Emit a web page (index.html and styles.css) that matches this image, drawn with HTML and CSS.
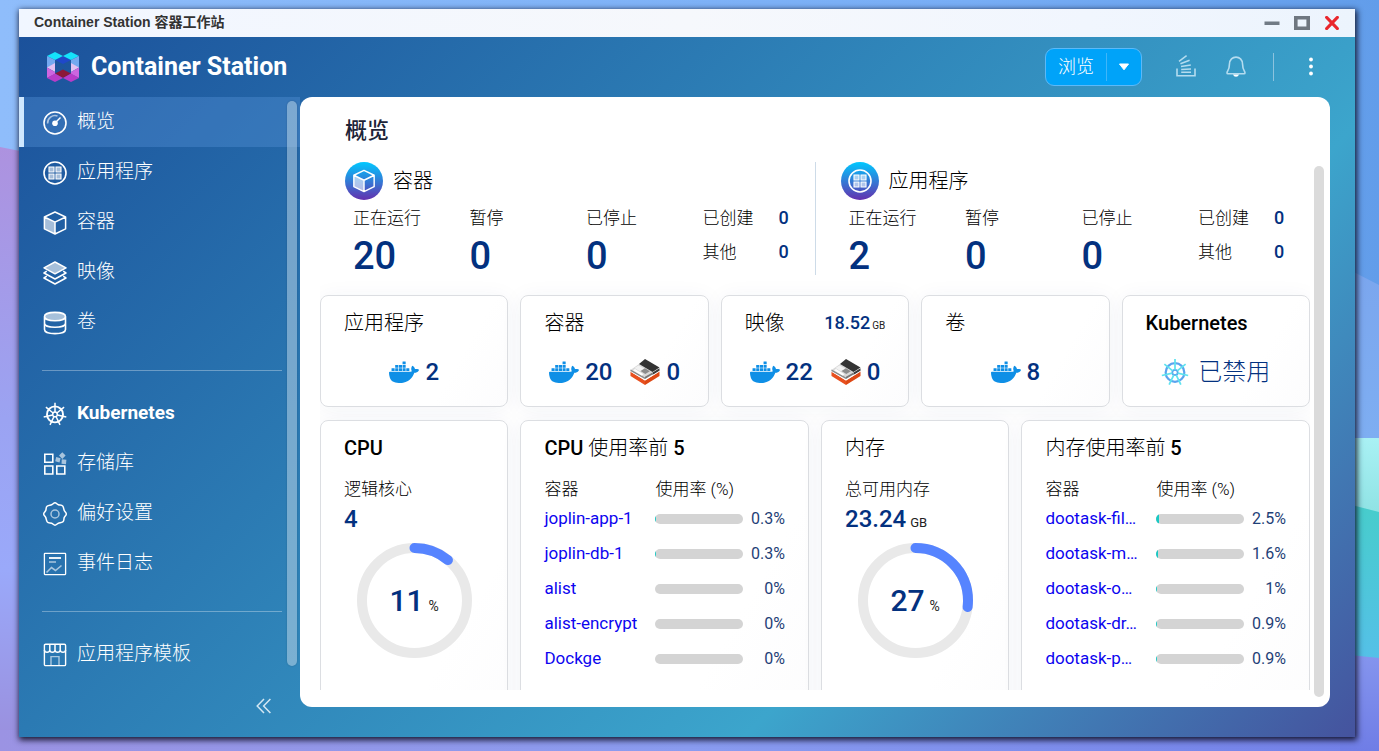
FILE: index.html
```html
<!DOCTYPE html>
<html lang="zh-CN">
<head>
<meta charset="utf-8">
<title>Container Station 容器工作站</title>
<link rel="stylesheet" href="styles.css">
</head>
<body>
<svg class="wallpaper" viewBox="0 0 1379 751" preserveAspectRatio="none" aria-hidden="true">
  <defs>
    <linearGradient id="sky"><stop offset="0" stop-color="#8fbdfb"/><stop offset=".7" stop-color="#78aef6"/><stop offset="1" stop-color="#629dea"/></linearGradient>
    <linearGradient id="dusk" x2="0" y2="1"><stop offset="0" stop-color="#ad92df"/><stop offset=".45" stop-color="#9ba3f2"/><stop offset=".7" stop-color="#9aa9fa"/><stop offset="1" stop-color="#9a8edc"/></linearGradient>
    <linearGradient id="shore"><stop offset="0" stop-color="#9b93e3"/><stop offset=".5" stop-color="#8a9cf0"/><stop offset="1" stop-color="#7280e8"/></linearGradient>
    <linearGradient id="rim" x2="0" y2="1"><stop offset="0" stop-color="#7ba6ee"/><stop offset="1" stop-color="#7eaef2"/></linearGradient>
    <linearGradient id="foam" x2="0" y2="1"><stop offset="0" stop-color="#a9f1f4"/><stop offset="1" stop-color="#8fe2e4"/></linearGradient>
    <linearGradient id="sea" x2="0" y2="1"><stop offset="0" stop-color="#47cdcb"/><stop offset="1" stop-color="#55c0e8"/></linearGradient>
    <linearGradient id="reef" x2="0" y2="1"><stop offset="0" stop-color="#8595ee"/><stop offset="1" stop-color="#6f7de6"/></linearGradient>
  </defs>
  <rect width="1379" height="751" fill="url(#sky)"/>
  <path d="M0 147L40 155V751H0z" fill="url(#dusk)"/>
  <path d="M0 730H1379V751H0z" fill="url(#shore)"/>
  <path d="M1340 265L1379 285V440H1340z" fill="url(#rim)"/>
  <path d="M1340 438H1379V515H1340z" fill="url(#foam)"/>
  <path d="M1340 502L1379 512V660H1340z" fill="url(#sea)"/>
  <path d="M1340 654L1379 658V751H1340z" fill="url(#reef)"/>
</svg>
<svg class="sprite" aria-hidden="true">
  <defs>
    <linearGradient id="disc" x2="0" y2="1"><stop offset="0" stop-color="#00c8ff"/><stop offset="1" stop-color="#6430ae"/></linearGradient>
    <symbol id="i-gauge" viewBox="0 0 24 24"><circle cx="12" cy="12" r="11" fill="none" stroke="currentColor" stroke-width="1.6"/><path d="M4.6 12.5A7.5 7.5 0 0 1 14.5 5" fill="none" stroke="currentColor" stroke-width="1.6" opacity=".6"/><path d="M12 12L17.5 6.5" stroke="currentColor" stroke-width="1.4"/><circle cx="12" cy="12.2" r="2.8" fill="currentColor"/></symbol>
    <symbol id="i-apps" viewBox="0 0 24 24"><circle cx="12" cy="12" r="11" fill="none" stroke="currentColor" stroke-width="1.6"/><g stroke="currentColor" stroke-width="1.1" fill="#fff" fill-opacity=".6"><path d="M6 6h5v5h-5zM13 6h5v5h-5zM6 13h5v5h-5zM13 13h5v5h-5z"/></g></symbol>
    <symbol id="i-cube" viewBox="0 0 24 24"><path d="M1.5 6.3L12 11.4V22.8L1.5 17.6z" fill="#fff" fill-opacity=".6"/><path d="M12 1L22.6 6V17.8L12 23L1.4 17.8V6zM1.4 6L12 11.2L22.6 6M12 11.2V23" fill="none" stroke="currentColor" stroke-width="1.5" stroke-linejoin="round"/></symbol>
    <symbol id="i-layers" viewBox="0 0 24 24"><path d="M12 1L23 6.8L12 12.8L1 6.8z" fill="#fff" fill-opacity=".6"/><path d="M12 1L23 6.8L12 12.8L1 6.8zM3.8 10.2L1 12L12 18L23 12L20.2 10.2M3.8 15.2L1 17L12 23L23 17L20.2 15.2" fill="none" stroke="currentColor" stroke-width="1.5" stroke-linejoin="round"/></symbol>
    <symbol id="i-disk" viewBox="0 0 24 24"><ellipse cx="12" cy="5.6" rx="10.4" ry="4" fill="#fff" fill-opacity=".6"/><path d="M1.5 5.6C1.5 0 22.5 0 22.5 5.6S1.5 11.2 1.5 5.6V18.6C1.5 24 22.5 24 22.5 18.6V5.6M1.5 12.2C1.5 17.6 22.5 17.6 22.5 12.2" fill="none" stroke="currentColor" stroke-width="1.6"/></symbol>
    <symbol id="i-helm" viewBox="0 0 24 24"><g fill="none" stroke="var(--rim, currentColor)" stroke-width="1.9"><circle cx="12" cy="12.4" r="8"/><circle cx="12" cy="12.4" r="2.3" stroke-width="1.5"/></g><path d="M12 10V.8M13.9 11L21.1 5.2M14.3 13L23.3 15M13 14.5L17 22.8M11 14.5L7 22.8M9.7 13L.7 15M10.1 11L2.9 5.2" fill="none" stroke="currentColor" stroke-width="1.5"/></symbol>
    <symbol id="i-repo" viewBox="0 0 24 24"><path d="M1.8 2.2h8v8h-8zM1.8 14h8v8h-8zM13.8 14h8v8h-8z" fill="none" stroke="currentColor" stroke-width="1.6"/><path d="M19.3.3L22.6 3.6L19.3 6.9L16 3.6zM13.2 5L17.6 6.2L16.5 10.4L12.2 9.2zM18.8 7.3L23.4 7.8L23 12.3L18.5 11.8z" fill="currentColor" opacity=".6"/></symbol>
    <symbol id="i-gear" viewBox="0 0 24 24"><path d="M12 .8C13.3.8 14 2.3 15.4 2.8S18.7 2.3 19.8 4.2 20.5 6.8 21.2 8.4 23.3 10.5 23.3 12 21.8 14.1 21.2 15.6 21.4 18.8 19.8 19.8 16.9 20.6 15.4 21.2 13.4 23.2 12 23.2 10.1 21.8 8.6 21.2 5.3 21.4 4.2 19.8 3.4 17.1 2.8 15.6.7 13.5.7 12 2.2 9.9 2.8 8.4 2.6 5.2 4.2 4.2 7.2 3.4 8.6 2.8 10.7.8 12 .8z" fill="none" stroke="currentColor" stroke-width="1.5"/><circle cx="12" cy="12" r="4" fill="none" stroke="currentColor" stroke-width="1.5" opacity=".6"/></symbol>
    <symbol id="i-log" viewBox="0 0 24 24"><rect x="1.4" y="1.4" width="21.2" height="21.2" rx=".5" fill="none" stroke="currentColor" stroke-width="1.3"/><path d="M6 6h12" stroke="currentColor" stroke-width="1.8"/><path d="M6 10h7M3.5 20.5L8.5 15.5L12.5 18.5L18.5 13.5" fill="none" stroke="currentColor" stroke-width="1.6" opacity=".6"/></symbol>
    <symbol id="i-store" viewBox="0 0 24 24"><rect x="1.4" y="1.2" width="21.2" height="21.4" rx="1.2" fill="none" stroke="currentColor" stroke-width="1.4"/><path d="M1.4 7C1.6 10 6.5 10 6.8 7V1M6.8 7C7 10 11.8 10 12 7V1M12 7C12.2 10 17 10 17.2 7V1M17.2 7C17.5 10 22.4 10 22.6 7" fill="none" stroke="currentColor" stroke-width="1.5"/><path d="M8 22.5V13.6h8V22.5" fill="none" stroke="currentColor" stroke-width="1.4" opacity=".6"/></symbol>
    <symbol id="i-whale" viewBox="0 0 24 17"><path transform="translate(0 -3.3)" fill="#0f8fe6" d="M13.983 11.078h2.119a.186.186 0 00.186-.185V9.006a.186.186 0 00-.186-.186h-2.119a.185.185 0 00-.185.185v1.888c0 .102.083.185.185.185m-2.954-5.43h2.118a.186.186 0 00.186-.186V3.574a.186.186 0 00-.186-.185h-2.118a.185.185 0 00-.185.185v1.888c0 .102.082.185.185.186m0 2.716h2.118a.187.187 0 00.186-.186V6.29a.186.186 0 00-.186-.185h-2.118a.185.185 0 00-.185.185v1.887c0 .102.082.185.185.186m-2.93 0h2.12a.186.186 0 00.184-.186V6.29a.185.185 0 00-.185-.185H8.1a.185.185 0 00-.185.185v1.887c0 .102.083.185.185.186m-2.964 0h2.119a.186.186 0 00.185-.186V6.29a.185.185 0 00-.185-.185H5.136a.186.186 0 00-.186.185v1.887c0 .102.084.185.186.186m5.893 2.715h2.118a.186.186 0 00.186-.185V9.006a.186.186 0 00-.186-.186h-2.118a.185.185 0 00-.185.185v1.888c0 .102.082.185.185.185m-2.93 0h2.12a.185.185 0 00.184-.185V9.006a.185.185 0 00-.184-.186h-2.12a.185.185 0 00-.184.185v1.888c0 .102.083.185.185.185m-2.964 0h2.119a.185.185 0 00.185-.185V9.006a.185.185 0 00-.184-.186h-2.12a.186.186 0 00-.186.186v1.887c0 .102.084.185.186.185m-2.92 0h2.12a.185.185 0 00.184-.185V9.006a.185.185 0 00-.184-.186h-2.12a.185.185 0 00-.184.185v1.888c0 .102.082.185.185.185M23.763 9.89c-.065-.051-.672-.51-1.954-.51-.338.001-.676.03-1.01.087-.248-1.7-1.653-2.53-1.716-2.566l-.344-.199-.226.327c-.284.438-.49.922-.612 1.43-.23.97-.09 1.882.403 2.661-.595.332-1.55.413-1.744.42H.751a.751.751 0 00-.75.748 11.376 11.376 0 00.692 4.062c.545 1.428 1.355 2.48 2.41 3.124 1.18.723 3.1 1.137 5.275 1.137.983.003 1.963-.086 2.93-.266a12.248 12.248 0 003.823-1.389c.98-.567 1.86-1.288 2.61-2.136 1.252-1.418 1.998-2.997 2.553-4.4h.221c1.372 0 2.215-.549 2.68-1.009.309-.293.55-.65.707-1.046l.098-.288Z"/></symbol>
    <symbol id="i-lxd" viewBox="0 0 29 26"><path d="M0 12.5L14.5 21.5V26L0 17z" fill="#e8501f"/><path d="M14.5 21.5L29 12.5V17L14.5 26z" fill="#dd4814"/><path d="M0 11L8.5 5L22 13L14.5 19.5L14.5 20.8L0 12.5z" fill="#d9d9d9"/><path d="M14.5 0L29 8.5L22 13L8.5 5z" fill="#333"/><path d="M22 13.6L29 9.3V11.8L22 16z" fill="#3b3b3b"/><path d="M14.5 20.6L29 12V12.6L14.5 21.4L0 12.8V12z" fill="#fff"/><path d="M14.5 17.8L22 13.4V15.6L14.5 20z" fill="#777"/><path d="M0 12L14.5 20V18.6L0 10.6z" fill="#8a8a8a"/><path d="M10 12L14.5 9.3L19.3 12.2L14.8 15z" fill="#8c8c8c"/><path d="M4 9L8 6.4L13.5 9.6L9.3 12.2z" fill="#f2f2f2"/><path d="M2.5 11.2L4.5 10L13 15.2L11 16.5z" fill="#fff"/></symbol>
  </defs>
</svg>

<div class="window">
  <div class="titlebar">
    <span class="titlebar-text">Container Station 容器工作站</span>
    <button class="winbtn" aria-label="最小化"><svg width="16" height="14" viewBox="0 0 16 14"><path d="M.5 5.5h15v3.5H.5z" fill="#717b85"/></svg></button>
    <button class="winbtn" aria-label="最大化"><svg width="16" height="14" viewBox="0 0 16 14"><path d="M1.8 1.8h12.4v10.4H1.8z" fill="none" stroke="#6f7780" stroke-width="3.6"/></svg></button>
    <button class="winbtn" aria-label="关闭"><svg width="16" height="14" viewBox="0 0 16 14"><path d="M2.6 1.4L13.4 12.6M13.4 1.4L2.6 12.6" stroke="#e9262c" stroke-width="3" stroke-linecap="round"/></svg></button>
  </div>
  <div class="app">
    <header class="header">
      <svg class="logo" viewBox="0 0 32 30" aria-hidden="true">
        <path d="M16 4L24 8L16 12L8 8z" fill="#1f48c9"/><path d="M16 17.5L24 21.5L16 26L8 21.5z" fill="#8c1838"/>
        <path d="M8 0L16 4L8 8L0 4zM24 0L32 4L24 8L16 4z" fill="#14e3fb"/>
        <path d="M0 4L8 8V12L0 16zM32 4L24 8V12L32 16z" fill="#73a9f0"/>
        <path d="M8 11L0 15.5L8 20zM24 11L32 15.5L24 20z" fill="#e2c2f2"/>
        <path d="M0 15.5L8 20V22L0 26zM32 15.5L24 20V22L32 26z" fill="#cd66e0"/>
        <path d="M0 26L8 21.5L16 26L8 30zM32 26L24 21.5L16 26L24 30z" fill="#b93cc8"/>
      </svg>
      <h1 class="brand">Container Station</h1>
      <div class="browse">
        <button class="browse-main">浏览</button>
        <button class="browse-more" aria-label="更多浏览选项"><svg width="12" height="8" viewBox="0 0 12 8"><path d="M1.5 1h9L6 6.8z" fill="#fff" stroke="#fff" stroke-width="1" stroke-linejoin="round"/></svg></button>
      </div>
      <button class="tool tool-tasks" aria-label="后台任务"><svg width="20" height="24" viewBox="0 0 20 24"><path d="M1 13.5V20.8H19V13.5" fill="none" stroke="currentColor" stroke-width="1.6"/><path d="M5.2 17.3H15M5.2 14.4L15 13.9M5 11.6L14.8 10M4.4 8.8L13.6 5.2M3 6.3L10.6 .6" stroke="currentColor" stroke-width="1.5" fill="none"/></svg></button>
      <button class="tool tool-bell" aria-label="通知"><svg width="20" height="22" viewBox="0 0 20 22"><path d="M3.4 8.500C3.4 -1.4 16.6 -1.4 16.6 8.500C16.6 14.2 19 15 19 17Q19 17.700 18 17.700H2Q1 17.700 1 17C1 15 3.4 14.2 3.4 8.500z" fill="none" stroke="currentColor" stroke-width="1.6"/><path d="M7 18.400H13Q12.3 20.800 10 20.800T7 18.400z" fill="#fff"/></svg></button>
      <span class="tool-sep"></span>
      <button class="tool tool-dots" aria-label="菜单"><svg width="6" height="20" viewBox="0 0 6 20"><g fill="#fff"><circle cx="3" cy="2.500" r="1.900"/><circle cx="3" cy="9.500" r="1.900"/><circle cx="3" cy="16.500" r="1.900"/></g></svg></button>
    </header>
    <div class="body">
      <aside class="sidebar">
        <nav class="nav">
          <a class="nav-item nav-active" href="#"><svg class="nav-icon"><use href="#i-gauge"/></svg><span>概览</span></a>
          <a class="nav-item" href="#"><svg class="nav-icon"><use href="#i-apps"/></svg><span>应用程序</span></a>
          <a class="nav-item" href="#"><svg class="nav-icon"><use href="#i-cube"/></svg><span>容器</span></a>
          <a class="nav-item" href="#"><svg class="nav-icon"><use href="#i-layers"/></svg><span>映像</span></a>
          <a class="nav-item" href="#"><svg class="nav-icon"><use href="#i-disk"/></svg><span>卷</span></a>
          <hr class="nav-sep">
          <a class="nav-item nav-latin" href="#"><svg class="nav-icon"><use href="#i-helm"/></svg><span>Kubernetes</span></a>
          <a class="nav-item" href="#"><svg class="nav-icon"><use href="#i-repo"/></svg><span>存储库</span></a>
          <a class="nav-item" href="#"><svg class="nav-icon"><use href="#i-gear"/></svg><span>偏好设置</span></a>
          <a class="nav-item" href="#"><svg class="nav-icon"><use href="#i-log"/></svg><span>事件日志</span></a>
          <hr class="nav-sep">
          <a class="nav-item" href="#"><svg class="nav-icon"><use href="#i-store"/></svg><span>应用程序模板</span></a>
        </nav>
        <button class="collapse" aria-label="收起"><svg width="16" height="16" viewBox="0 0 16 16"><path d="M8 1L1.2 8L8 15M14.4 1L7.6 8L14.4 15" fill="none" stroke="currentColor" stroke-width="1.5"/></svg></button>
        <span class="thumb thumb-nav"></span>
      </aside>
      <main class="panel">
        <h2 class="page-title">概览</h2>
        <div class="scroll">
          <div class="summary">
            <section class="sum">
              <h3 class="sum-head"><svg class="sum-icon" viewBox="0 0 38 38"><circle cx="19" cy="19" r="19" fill="url(#disc)"/><use href="#i-cube" x="7.500" y="7" width="23" height="24"/></svg>容器</h3>
              <div class="stats">
                <dl class="stat"><dt>正在运行</dt><dd>20</dd></dl>
                <dl class="stat"><dt>暂停</dt><dd>0</dd></dl>
                <dl class="stat"><dt>已停止</dt><dd>0</dd></dl>
                <dl class="minor"><dt>已创建</dt><dd>0</dd><dt>其他</dt><dd>0</dd></dl>
              </div>
            </section>
            <section class="sum sum-right">
              <h3 class="sum-head"><svg class="sum-icon" viewBox="0 0 38 38"><circle cx="19" cy="19" r="19" fill="url(#disc)"/><use href="#i-apps" x="7" y="7" width="24" height="24"/></svg>应用程序</h3>
              <div class="stats">
                <dl class="stat"><dt>正在运行</dt><dd>2</dd></dl>
                <dl class="stat"><dt>暂停</dt><dd>0</dd></dl>
                <dl class="stat"><dt>已停止</dt><dd>0</dd></dl>
                <dl class="minor"><dt>已创建</dt><dd>0</dd><dt>其他</dt><dd>0</dd></dl>
              </div>
            </section>
          </div>
          <div class="cards">
            <section class="card"><h3 class="card-title">应用程序</h3><div class="counts"><span class="count"><svg class="whale"><use href="#i-whale"/></svg>2</span></div></section>
            <section class="card"><h3 class="card-title">容器</h3><div class="counts"><span class="count"><svg class="whale"><use href="#i-whale"/></svg>20</span><span class="count"><svg class="lxd"><use href="#i-lxd"/></svg>0</span></div></section>
            <section class="card"><h3 class="card-title">映像<span class="size">18.52<small>GB</small></span></h3><div class="counts"><span class="count"><svg class="whale"><use href="#i-whale"/></svg>22</span><span class="count"><svg class="lxd"><use href="#i-lxd"/></svg>0</span></div></section>
            <section class="card"><h3 class="card-title">卷</h3><div class="counts"><span class="count"><svg class="whale"><use href="#i-whale"/></svg>8</span></div></section>
            <section class="card"><h3 class="card-title"><b>Kubernetes</b></h3><div class="counts"><span class="count count-off"><svg class="helm"><use href="#i-helm"/></svg>已禁用</span></div></section>

            <section class="card tall"><h3 class="card-title"><b>CPU</b></h3>
              <div class="metric-label">逻辑核心</div><div class="metric">4</div>
              <div class="donut"><svg viewBox="0 0 115 115"><circle class="ring" cx="57.500" cy="57.500" r="52.500"/><circle class="arc" cx="57.500" cy="57.500" r="52.500" pathLength="100" stroke-dasharray="11 100"/></svg><div class="donut-text">11<small>%</small></div></div>
            </section>
            <section class="card wide tall"><h3 class="card-title"><b>CPU&nbsp;</b>使用率前<b>&nbsp;5</b></h3>
              <table class="top">
                <colgroup><col class="c-name"><col class="c-bar"><col></colgroup>
                <thead><tr><th>容器</th><th colspan="2">使用率 (%)</th></tr></thead>
                <tbody>
                  <tr><td><a href="#">joplin-app-1</a></td><td><div class="bar"><i style="width:1%"></i></div></td><td>0.3%</td></tr>
                  <tr><td><a href="#">joplin-db-1</a></td><td><div class="bar"><i style="width:1%"></i></div></td><td>0.3%</td></tr>
                  <tr><td><a href="#">alist</a></td><td><div class="bar"></div></td><td>0%</td></tr>
                  <tr><td><a href="#">alist-encrypt</a></td><td><div class="bar"></div></td><td>0%</td></tr>
                  <tr><td><a href="#">Dockge</a></td><td><div class="bar"></div></td><td>0%</td></tr>
                </tbody>
              </table>
            </section>
            <section class="card tall"><h3 class="card-title">内存</h3>
              <div class="metric-label">总可用内存</div><div class="metric">23.24<small>GB</small></div>
              <div class="donut"><svg viewBox="0 0 115 115"><circle class="ring" cx="57.500" cy="57.500" r="52.500"/><circle class="arc" cx="57.500" cy="57.500" r="52.500" pathLength="100" stroke-dasharray="27 100"/></svg><div class="donut-text">27<small>%</small></div></div>
            </section>
            <section class="card wide tall"><h3 class="card-title">内存使用率前<b>&nbsp;5</b></h3>
              <table class="top">
                <colgroup><col class="c-name"><col class="c-bar"><col></colgroup>
                <thead><tr><th>容器</th><th colspan="2">使用率 (%)</th></tr></thead>
                <tbody>
                  <tr><td><a href="#">dootask-fil…</a></td><td><div class="bar"><i style="width:2.5%"></i></div></td><td>2.5%</td></tr>
                  <tr><td><a href="#">dootask-m…</a></td><td><div class="bar"><i style="width:1.6%"></i></div></td><td>1.6%</td></tr>
                  <tr><td><a href="#">dootask-o…</a></td><td><div class="bar"><i style="width:1%"></i></div></td><td>1%</td></tr>
                  <tr><td><a href="#">dootask-dr…</a></td><td><div class="bar"><i style="width:1%"></i></div></td><td>0.9%</td></tr>
                  <tr><td><a href="#">dootask-p…</a></td><td><div class="bar"><i style="width:1%"></i></div></td><td>0.9%</td></tr>
                </tbody>
              </table>
            </section>
          </div>
        </div>
        <span class="thumb thumb-main"></span>
      </main>
    </div>
  </div>
</div>
</body>
</html>
```
FILE: styles.css
```css
* { box-sizing: border-box; }
html, body { height: 100%; margin: 0; }
body {
  display: flex;
  padding: 9px 24px 14px 19px;
  overflow: hidden;
  font-family: Roboto, "Noto Sans CJK SC", sans-serif;
  color: #000;
}
h1, h2, h3, dl, dd { margin: 0; }
button { border: 0; padding: 0; background: none; font: inherit; color: inherit; }
a { text-decoration: none; }
svg { display: block; flex: none; }
small { line-height: 1; }
.wallpaper { position: fixed; inset: 0; width: 100%; height: 100%; z-index: -1; }
.sprite { position: absolute; width: 0; height: 0; }

.window {
  flex: 1;
  min-width: 0;
  display: flex;
  flex-direction: column;
  box-shadow: 1px 2px 6px 1px rgba(10, 10, 30, .9);
}
.titlebar {
  display: flex;
  align-items: center;
  height: 28px;
  padding: 0 15px;
  gap: 14px;
  background: linear-gradient(90deg, #f1f6ff, #f6f8fc 50%, #f1f6fe 80%, #ecf4fd);
}
.titlebar-text { flex: 1; font-family: "Liberation Sans", "Noto Sans CJK SC", sans-serif; font-size: 14px; line-height: 20px; font-weight: 700; color: #333; }
.titlebar-text, .nav-item span { padding-bottom: 2px; }

.app {
  flex: 1;
  min-height: 0;
  display: flex;
  flex-direction: column;
  background: linear-gradient(135deg, #1b519b, #3ca5cc 70%, #45539e);
  color: #fff;
}
.header { display: flex; align-items: center; height: 60px; padding: 0 41px 0 27px; }
.logo { width: 34px; height: 30px; }
.brand { flex: 1; margin-left: 11px; font-size: 25px; line-height: 32px; font-weight: 700; }
.browse {
  display: flex;
  align-items: center;
  height: 38px;
  border: 1px solid #5cb9f8;
  border-radius: 9px;
  background: #00a3f9;
}
.browse-main { width: 61px; height: 28px; font-size: 18px; line-height: 28px; font-weight: 300; border-right: 1px solid #3fb6fa; }
.browse-more { width: 34px; height: 28px; display: grid; place-items: center; }
.tool { display: grid; place-items: center; color: #b4dcef; }
.tool-tasks { margin-left: 34px; }
.tool-bell { margin-left: 30px; }
.tool-sep { width: 1px; height: 28px; margin: 0 34px 0 27px; background: #8cc3de; }
.tool-dots { width: 6px; }

.body { flex: 1; min-height: 0; display: flex; padding: 0 25px 30px 0; }
.sidebar { position: relative; width: 281px; margin-bottom: -30px; flex: none; }
.nav-item {
  display: flex;
  align-items: center;
  gap: 10px;
  height: 50px;
  padding: 2px 0 0 19px;
  border-left: 5px solid transparent;
  font-size: 19px;
  line-height: 28px;
  font-weight: 300;
  color: #fff;
}
.nav-active { border-left-color: #cfe8ff; background: rgba(90, 150, 220, .36); }
.nav-latin { font-weight: 700; }
.nav-icon { width: 24px; height: 24px; }
.nav-sep { height: 1px; margin: 23px 18px 17px 23px; border: 0; background: rgba(255, 255, 255, .32); }
.collapse { display: block; margin: 19px 0 0 237px; color: #d3e7f3; }
.thumb { position: absolute; width: 10px; border-radius: 5px; }
.thumb-nav { top: 4px; bottom: 71px; right: 3px; background: rgba(190, 215, 232, .52); box-shadow: 0 0 2px rgba(0, 0, 0, .2); }
.thumb-main { top: 69px; bottom: 10px; right: 6px; background: #dbdbdb; }

.panel {
  position: relative;
  flex: 1;
  min-width: 0;
  display: flex;
  flex-direction: column;
  padding: 19px 20px 17px;
  border-radius: 12px;
  background: #fff;
  color: #000;
}
.page-title { margin: 0 25px 14px; font-size: 22px; line-height: 30px; font-weight: 500; color: #1d2438; }
.scroll { flex: 1; min-height: 0; overflow: hidden; padding-top: 2px; }
.summary { display: flex; }
.sum { flex: 1; height: 113px; padding-left: 25px; }
.sum-right { border-left: 1px solid #cddbe8; }
.sum-head { display: flex; align-items: center; gap: 10px; font-size: 20px; line-height: 38px; font-weight: 300; color: #000; }
.sum-icon { width: 38px; height: 38px; color: #fff; }
.stats { display: grid; grid-template-columns: repeat(3, 1fr) 112px; padding: 6px 0 0 8px; }
.stat dt, .minor dt, .metric-label, .top th { font-size: 17px; line-height: 24px; font-weight: 300; }
.stat dd { font-size: 38px; line-height: 52px; font-weight: 500; color: #03317f; }
.minor { display: grid; grid-template-columns: 76px auto; row-gap: 10px; align-content: start; }
.minor dd { font-size: 18px; line-height: 24px; font-weight: 500; color: #03317f; }

.cards { display: grid; grid-template-columns: repeat(10, 1fr); gap: 13px 12px; padding-top: 20px; }
.card {
  grid-column: span 2;
  min-width: 0;
  height: 112px;
  padding: 15px 23px;
  border: 1px solid #dcdee2;
  border-radius: 8px;
  background: linear-gradient(120deg, #fff 70%, #fcfcfd);
  box-shadow: 0 2px 22px rgba(40, 60, 110, .05);
}
.wide { grid-column: span 3; }
.tall { height: 320px; }
.card-title { display: flex; align-items: center; height: 24px; font-size: 20px; line-height: 24px; font-weight: 300; }
.card-title b { font-weight: 500; }
.size { margin-left: auto; font-size: 18px; font-weight: 500; color: #03317f; }
.size small, .metric small, .donut-text small { margin-left: 2px; font-size: 10px; font-weight: 400; color: #222; }
.counts { display: flex; justify-content: center; gap: 18px; margin-top: 22px; }
.count { display: flex; align-items: center; gap: 6px; font-size: 24px; line-height: 30px; font-weight: 500; color: #03317f; }
.count-off { gap: 9px; font-weight: 300; }
.whale { width: 30px; height: 22px; }
.lxd { width: 30px; height: 26px; }
.helm { width: 28px; height: 28px; color: #5fe3ee; --rim: #5aa4ee; }

.metric-label { margin-top: 17px; }
.metric { height: 36px; font-size: 24px; line-height: 36px; font-weight: 500; color: #03317f; }
.metric small { margin-left: 4px; font-size: 13px; }
.donut { display: grid; place-items: center; margin-top: 6px; }
.donut svg, .donut-text { grid-area: 1 / 1; }
.donut svg { width: 115px; height: 115px; transform: rotate(-90deg); }
.ring, .arc { fill: none; stroke-width: 10; }
.ring { stroke: #e9e9e9; }
.arc { stroke: #5684ff; stroke-linecap: round; }
.donut-text { font-size: 30px; line-height: 36px; font-weight: 500; color: #03317f; }
.donut-text small { margin-left: 5px; font-size: 14px; }

.top { width: 100%; margin-top: 17px; table-layout: fixed; border-collapse: collapse; }
.c-name { width: 111px; }
.c-bar { width: 88px; }
.top th { padding: 0; height: 24px; text-align: left; white-space: nowrap; }
.top td { padding: 0; height: 35px; line-height: 24px; }
.top a { font-size: 17px; white-space: nowrap; color: #0d05ef; }
.top td:last-child { text-align: right; font-size: 16px; color: #1f3f77; }
.bar { height: 10px; border-radius: 5px; overflow: hidden; background: #d4d4d4; }
.bar i { display: block; height: 100%; background: #19c9c4; }
```
